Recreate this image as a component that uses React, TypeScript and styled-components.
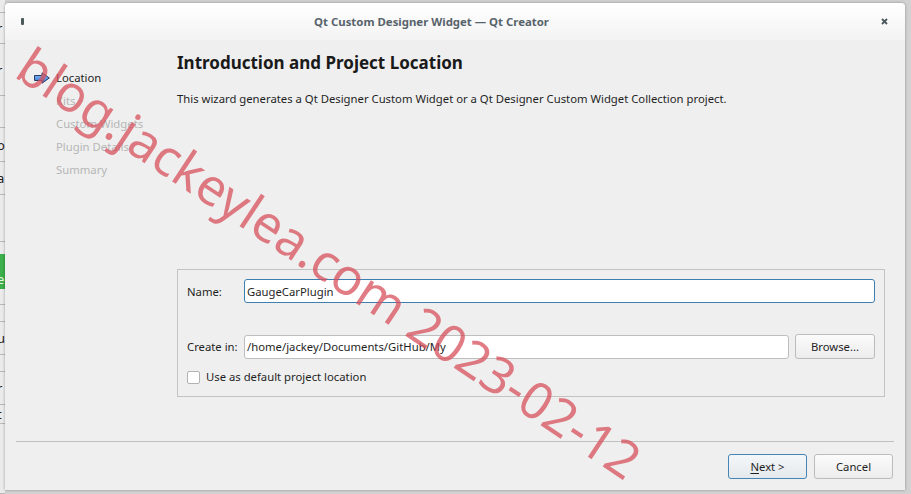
import styled, { createGlobalStyle } from "styled-components";

const GlobalStyle = createGlobalStyle`
  html, body {
    margin: 0;
    padding: 0;
  }
  body {
    font-family: "Noto Sans", "DejaVu Sans", sans-serif;
    background: #d2d2d2;
  }
`;

// rows of the app that is peeking out behind the dialog
const backRows = [
  { h: 13, t: "" },
  { h: 31, t: "r" },
  { h: 52, t: "r" },
  { h: 32, t: "" },
  { h: 34, t: "o" },
  { h: 33, t: "a" },
  { h: 47, t: "" },
  { h: 63, t: "e", green: true },
  { h: 17, t: "" },
  { h: 33, t: "u" },
  { h: 17, t: "" },
  { h: 33, t: "r" },
  { h: 19, t: "t" },
  { h: 70, t: "" },
];

const steps = [
  { label: "Location", active: true },
  { label: "Kits", active: false },
  { label: "Custom Widgets", active: false },
  { label: "Plugin Details", active: false },
  { label: "Summary", active: false },
];

const StepArrow = () => (
  <svg width="16" height="12" viewBox="0 0 16 12">
    <defs>
      <linearGradient id="arrowFill" x1="0" y1="0" x2="0" y2="1">
        <stop offset="0" stopColor="#8ec2f5" />
        <stop offset="1" stopColor="#2f73d6" />
      </linearGradient>
    </defs>
    <path
      d="M0.5 3.5 H8 V0.8 L15.3 6 L8 11.2 V8.5 H0.5 Z"
      fill="url(#arrowFill)"
      stroke="#2a3a66"
      strokeWidth="1"
      strokeLinejoin="round"
    />
  </svg>
);

const CloseIcon = () => (
  <svg width="7" height="7" viewBox="0 0 7 7">
    <path d="M1 1 L6 6 M6 1 L1 6" stroke="#4b575c" strokeWidth="1.8" />
  </svg>
);

const App = () => {
  return (
    <Desktop>
      <GlobalStyle />
      <BackApp>
        {backRows.map((r, i) => (
          <BackRow key={i} $h={r.h} $green={r.green}>
            {r.t}
          </BackRow>
        ))}
      </BackApp>

      <Window>
        <TitleBar>
          <WindowIcon />
          <Title>Qt Custom Designer Widget — Qt Creator</Title>
          <CloseBox>
            <CloseIcon />
          </CloseBox>
        </TitleBar>

        <Body>
          <Main>
            <Sidebar>
              {steps.map((s) => (
                <Step key={s.label} $active={s.active}>
                  <StepMark>{s.active && <StepArrow />}</StepMark>
                  {s.label}
                </Step>
              ))}
            </Sidebar>

            <Content>
              <Heading>Introduction and Project Location</Heading>
              <Description>
                This wizard generates a Qt Designer Custom Widget or a Qt
                Designer Custom Widget Collection project.
              </Description>

              <GroupBox>
                <FormRow $top={0}>
                  <FieldLabel>Name:</FieldLabel>
                  <TextInput $focused defaultValue="GaugeCarPlugin" />
                </FormRow>
                <FormRow $top={31}>
                  <FieldLabel>Create in:</FieldLabel>
                  <TextInput defaultValue="/home/jackey/Documents/GitHub/My" />
                  <PushButton $width={80}>Browse...</PushButton>
                </FormRow>
                <FormRow $top={9}>
                  <CheckBox />
                  <CheckLabel>Use as default project location</CheckLabel>
                </FormRow>
              </GroupBox>
            </Content>
          </Main>

          <Separator />

          <ButtonRow>
            <PushButton $width={79} $default>
              <u>N</u>ext &gt;
            </PushButton>
            <PushButton $width={79}>Cancel</PushButton>
          </ButtonRow>
        </Body>
      </Window>

      <Watermark>blog.jackeylea.com 2023-02-12</Watermark>
    </Desktop>
  );
};

export default App;

const Desktop = styled.div`
  position: relative;
  display: flex;
  width: 911px;
  height: 494px;
  overflow: hidden;
  background: #d2d2d2;
`;

const BackApp = styled.div`
  width: 5px;
  flex-shrink: 0;
  display: flex;
  flex-direction: column;
  overflow: hidden;
  background: #ebebeb;
`;

const BackRow = styled.div<{ $h: number; $green?: boolean }>`
  height: ${({ $h }) => $h}px;
  flex-shrink: 0;
  box-sizing: border-box;
  border-bottom: 1px solid #b9b9b9;
  display: flex;
  align-items: center;
  font-size: 13px;
  color: ${({ $green }) => ($green ? "#e8f5e8" : "#222")};
  padding-top: ${({ $green }) => ($green ? "12px" : "0")};
  background: ${({ $green }) =>
    $green ? "linear-gradient(#ebebeb 0 12px, #3cb04a 12px 47px, #ebebeb 47px)" : "none"};
  text-indent: -3px;
  white-space: nowrap;
`;

const Window = styled.div`
  width: 900px;
  height: 487px;
  margin-top: 3px;
  display: flex;
  flex-direction: column;
  background: #efefef;
  border-radius: 4px 4px 0 0;
  box-shadow: 0 0 3px rgba(0, 0, 0, 0.35);
  overflow: hidden;
`;

const TitleBar = styled.div`
  height: 37px;
  flex-shrink: 0;
  display: flex;
  align-items: center;
  padding: 0 14px 0 16px;
  background: linear-gradient(#ffffff, #f3f3f3);
`;

const WindowIcon = styled.span`
  width: 3px;
  height: 7px;
  border-radius: 1px;
  background: #4b5a5a;
`;

const Title = styled.div`
  flex: 1;
  text-align: center;
  font-size: 11.4px;
  font-weight: 700;
  color: #57636a;
  margin: 0 48px 0 10px;
`;

const CloseBox = styled.span`
  display: flex;
  align-items: center;
  justify-content: center;
  width: 14px;
  height: 14px;
`;

const Body = styled.div`
  flex: 1;
  display: flex;
  flex-direction: column;
  padding: 0 11px 11px;
`;

const Main = styled.div`
  height: 401px;
  display: flex;
`;

const Sidebar = styled.div`
  width: 161px;
  flex-shrink: 0;
  padding: 26px 0 0 18px;
  box-sizing: border-box;
`;

const Step = styled.div<{ $active: boolean }>`
  display: flex;
  align-items: center;
  height: 23px;
  gap: 6px;
  font-size: 11.3px;
  color: ${({ $active }) => ($active ? "#1f1f1f" : "#b6b6b6")};
`;

const StepMark = styled.span`
  width: 16px;
  height: 12px;
  display: flex;
`;

const Content = styled.div`
  flex: 1;
  padding: 12px 9px 0 0;
  display: flex;
  flex-direction: column;
`;

const Heading = styled.div`
  font-size: 17px;
  line-height: 22px;
  font-weight: 700;
  color: #1a1a1a;
`;

const Description = styled.div`
  margin-top: 17px;
  font-size: 11.3px;
  line-height: 16px;
  color: #1f1f1f;
`;

const GroupBox = styled.div`
  margin-top: 162px;
  border: 1px solid #c3c3c3;
  padding: 9px 9px 10px 9px;
  display: flex;
  flex-direction: column;
`;

const FormRow = styled.div<{ $top: number }>`
  display: flex;
  align-items: center;
  gap: 6px;
  margin-top: ${({ $top }) => $top}px;
`;

const FieldLabel = styled.span`
  width: 51px;
  flex-shrink: 0;
  font-size: 11.3px;
  color: #1f1f1f;
  white-space: nowrap;
`;

const TextInput = styled.input<{ $focused?: boolean }>`
  flex: 1;
  min-width: 0;
  height: 24px;
  box-sizing: border-box;
  padding: 0 2px;
  font: inherit;
  font-size: 11.3px;
  color: #1f1f1f;
  background: #ffffff;
  border: 1px solid ${({ $focused }) => ($focused ? "#3d7fb0" : "#bdbdbd")};
  border-radius: 3px;
  outline: none;
`;

const PushButton = styled.button<{ $width: number; $default?: boolean }>`
  width: ${({ $width }) => $width}px;
  height: 25px;
  flex-shrink: 0;
  box-sizing: border-box;
  padding: 0;
  font: inherit;
  font-size: 11.3px;
  color: #1f1f1f;
  border-radius: 3px;
  border: 1px solid ${({ $default }) => ($default ? "#4585b5" : "#bcbcbc")};
  background: ${({ $default }) =>
    $default
      ? "linear-gradient(#f4f7f9, #e4e9ed)"
      : "linear-gradient(#fbfbfb, #ececec)"};

  u {
    text-underline-offset: 2px;
  }
`;

const CheckBox = styled.span`
  width: 13px;
  height: 13px;
  flex-shrink: 0;
  box-sizing: border-box;
  border: 1px solid #b3b3b3;
  border-radius: 2px;
  background: #ffffff;
`;

const CheckLabel = styled.span`
  font-size: 11.3px;
  line-height: 18px;
  color: #1f1f1f;
`;

const Separator = styled.div`
  height: 1px;
  background: #c1c1c1;
`;

const ButtonRow = styled.div`
  display: flex;
  justify-content: flex-end;
  gap: 7px;
  margin-top: 12px;
  padding-right: 1px;
`;

const Watermark = styled.span`
  position: absolute;
  left: 330px;
  top: 262px;
  transform: translate(-50%, -50%) rotate(33.5deg);
  font-family: "Noto Sans", sans-serif;
  font-size: 51px;
  font-weight: 400;
  color: rgba(214, 78, 90, 0.74);
  white-space: nowrap;
  pointer-events: none;
`;
